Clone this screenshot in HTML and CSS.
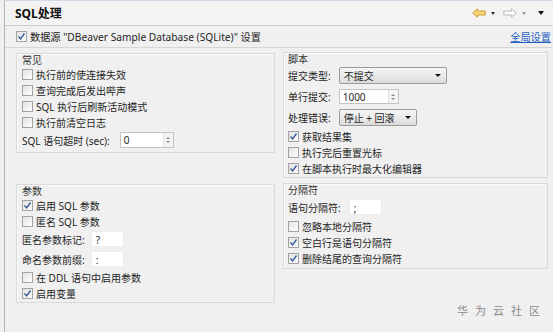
FILE: index.html
```html
<!DOCTYPE html>
<html lang="zh">
<head>
    <meta charset="UTF-8">
    <title>SQL处理</title>
    <link rel="stylesheet" href="styles.css">
</head>
<body>
    <div class="page">
        <header class="head">
            <h1 class="title">SQL处理</h1>
            <div class="tools">
                <svg class="arrow" width="14" height="10" viewBox="0 0 14 10"><path d="M0.8 5 L5.5 0.8 V3 H13.2 V7 H5.5 V9.2 Z" fill="#f7d67c" stroke="#d49a2c" stroke-width="1"/></svg>
                <span class="drop"></span>
                <svg class="arrow" width="14" height="10" viewBox="0 0 14 10"><path d="M13.2 5 L8.5 0.8 V3 H0.8 V7 H8.5 V9.2 Z" fill="#fbfbfb" stroke="#b9b9b9" stroke-width="1"/></svg>
                <span class="drop dim"></span>
                <span class="drop big"></span>
            </div>
        </header>

        <div class="source">
            <div class="chk"><span class="box on"><svg viewBox="0 0 9 9"><path d="M1.5 4.5 L3.6 6.8 L7.5 1.5" fill="none" stroke="#3b5b9e" stroke-width="1.4"/></svg></span>数据源 "DBeaver Sample Database (SQLite)" 设置</div>
            <a class="global" href="#">全局设置</a>
        </div>

        <div class="columns">
            <!-- left -->
            <div class="col">
                <section class="group common">
                    <div class="legend">常见</div>
                    <div class="chk"><span class="box"></span>执行前的使连接失效</div>
                    <div class="chk"><span class="box"></span>查询完成后发出哔声</div>
                    <div class="chk"><span class="box"></span>SQL 执行后刷新活动模式</div>
                    <div class="chk"><span class="box"></span>执行前清空日志</div>
                    <div class="line">
                        <span class="lbl">SQL 语句超时 (sec):</span>
                        <div class="spin"><span class="val">0</span><span class="btns"><i class="up"></i><i class="dn"></i></span></div>
                    </div>
                </section>

                <section class="group params">
                    <div class="legend">参数</div>
                    <div class="chk"><span class="box on"><svg viewBox="0 0 9 9"><path d="M1.5 4.5 L3.6 6.8 L7.5 1.5" fill="none" stroke="#3b5b9e" stroke-width="1.4"/></svg></span>启用 SQL 参数</div>
                    <div class="chk"><span class="box"></span>匿名 SQL 参数</div>
                    <div class="line tall">
                        <span class="lbl">匿名参数标记:</span>
                        <div class="field">?</div>
                    </div>
                    <div class="line tall">
                        <span class="lbl">命名参数前缀:</span>
                        <div class="field">:</div>
                    </div>
                    <div class="chk"><span class="box"></span>在 DDL 语句中启用参数</div>
                    <div class="chk"><span class="box on"><svg viewBox="0 0 9 9"><path d="M1.5 4.5 L3.6 6.8 L7.5 1.5" fill="none" stroke="#3b5b9e" stroke-width="1.4"/></svg></span>启用变量</div>
                </section>
            </div>

            <!-- right -->
            <div class="col">
                <section class="group script">
                    <div class="legend">脚本</div>
                    <div class="line mid">
                        <span class="lbl">提交类型:</span>
                        <div class="combo wide"><span>不提交</span><i class="tri"></i></div>
                    </div>
                    <div class="line mid">
                        <span class="lbl">单行提交:</span>
                        <div class="spin rows"><span class="val">1000</span><span class="btns"><i class="up"></i><i class="dn"></i></span></div>
                    </div>
                    <div class="line mid">
                        <span class="lbl">处理错误:</span>
                        <div class="combo"><span>停止&nbsp;+&nbsp;回滚</span><i class="tri"></i></div>
                    </div>
                    <div class="chk"><span class="box on"><svg viewBox="0 0 9 9"><path d="M1.5 4.5 L3.6 6.8 L7.5 1.5" fill="none" stroke="#3b5b9e" stroke-width="1.4"/></svg></span>获取结果集</div>
                    <div class="chk"><span class="box"></span>执行完后重置光标</div>
                    <div class="chk"><span class="box on"><svg viewBox="0 0 9 9"><path d="M1.5 4.5 L3.6 6.8 L7.5 1.5" fill="none" stroke="#3b5b9e" stroke-width="1.4"/></svg></span>在脚本执行时最大化编辑器</div>
                </section>

                <section class="group delim">
                    <div class="legend">分隔符</div>
                    <div class="line big">
                        <span class="lbl">语句分隔符:</span>
                        <div class="field">;</div>
                    </div>
                    <div class="chk"><span class="box"></span>忽略本地分隔符</div>
                    <div class="chk"><span class="box on"><svg viewBox="0 0 9 9"><path d="M1.5 4.5 L3.6 6.8 L7.5 1.5" fill="none" stroke="#3b5b9e" stroke-width="1.4"/></svg></span>空白行是语句分隔符</div>
                    <div class="chk"><span class="box on"><svg viewBox="0 0 9 9"><path d="M1.5 4.5 L3.6 6.8 L7.5 1.5" fill="none" stroke="#3b5b9e" stroke-width="1.4"/></svg></span>删除结尾的查询分隔符</div>
                </section>
            </div>
        </div>

        <div class="mark">华为云社区</div>
    </div>
</body>
</html>
```

FILE: styles.css
```css
/* base */
body {
    margin: 0;
    background: #f0f0f0;
    font-family: "Noto Sans", "Noto Sans CJK SC", sans-serif;
    font-size: 10px;
    color: #1f1f1f;
}
.page {
    position: relative;
    height: 332px;
    margin-left: 4px;
    border-left: 1px solid #b3b3b3;
    border-top: 1px solid #cfdbe9;
    box-sizing: border-box;
}

/* header */
.head {
    height: 24px;
    display: flex;
    align-items: center;
    justify-content: space-between;
    padding: 0 9px 0 10px;
    border-bottom: 1px solid #cdcdcd;
    background: #f3f3f3;
}
.title { margin: 0; font-size: 12px; font-weight: bold; color: #111; }
.tools { display: flex; align-items: center; gap: 3px; }
.drop {
    width: 0; height: 0;
    border-left: 2.5px solid transparent;
    border-right: 2.5px solid transparent;
    border-top: 3px solid #2b2b2b;
    margin: 0 5px 0 2px;
}
.drop.dim { border-top-color: #9c9c9c; }
.drop.big { border-left-width: 3.5px; border-right-width: 3.5px; border-top-width: 4px; border-top-color: #111; margin: 0 0 0 4px; }

/* data source row */
.source {
    height: 21px;
    display: flex;
    align-items: center;
    justify-content: space-between;
    padding: 0 2px 0 11px;
    border-bottom: 1px solid #d6d6d6;
    font-size: 10.2px;
}
.global { color: #1f5fbf; text-decoration: underline; }

/* columns */
.columns {
    display: grid;
    grid-template-columns: 259px 265px;
    gap: 8px;
    padding: 4px 0 0 11px;
}
.col { display: flex; flex-direction: column; }
.group {
    border: 1px solid #d9d9d9;
    box-shadow: inset 1px 1px 0 #fafafa;
    padding: 0 0 1px 5px;
}
.col + .col .group { padding-left: 4px; }
.common { margin-top: 1px; padding-bottom: 2px; }
.params { margin-top: 31px; }
.delim { margin-top: 5px; padding-bottom: 2px; }
.legend { height: 12px; line-height: 12px; color: #333; }

/* checkbox rows */
.chk { height: 16px; display: flex; align-items: center; gap: 3px; white-space: nowrap; }
.box {
    width: 9px; height: 9px;
    border: 1px solid #a3a3a3;
    background: linear-gradient(135deg, #e2e2e2, #fdfdfd);
    display: flex;
    flex: none;
}
.box svg { width: 9px; height: 9px; }

/* label + control rows */
.line { height: 20px; display: flex; align-items: center; gap: 10px; white-space: nowrap; }
.line.tall { height: 20px; gap: 6px; }
.line.mid { height: 21px; gap: 8px; }
.line.big { height: 22px; gap: 8px; }
.spin {
    width: 54px; height: 16px;
    background: #fff;
    border: 1px solid #c4c4c4;
    display: flex;
    justify-content: space-between;
    align-items: center;
    box-sizing: border-box;
    padding-left: 3px;
}
.spin.rows { width: 60px; height: 15px; }
.btns { width: 9px; height: 100%; display: flex; flex-direction: column; justify-content: center; gap: 2px; background: #f4f4f4; border-left: 1px solid #e0e0e0; align-items: center; }
.up, .dn { width: 0; height: 0; border-left: 2px solid transparent; border-right: 2px solid transparent; }
.up { border-bottom: 2px solid #7e8ea6; }
.dn { border-top: 2px solid #7e8ea6; }
.combo {
    width: 78px; height: 17px;
    box-sizing: border-box;
    border: 1px solid #9a9a9a;
    border-radius: 2px;
    background: linear-gradient(#f7f7f7, #dcdcdc);
    display: flex;
    align-items: center;
    justify-content: space-between;
    padding: 0 5px 0 4px;
}
.combo.wide { width: 108px; }
.tri { width: 0; height: 0; border-left: 3px solid transparent; border-right: 3px solid transparent; border-top: 3px solid #111; }
.field {
    width: 33px; height: 16px;
    line-height: 16px;
    background: #fff;
    border: 1px solid #ececec;
    box-sizing: border-box;
    padding-left: 4px;
}

/* watermark */
.mark {
    position: absolute;
    right: 6px;
    bottom: 14px;
    font-size: 11px;
    letter-spacing: 7px;
    color: #8b8b8b;
}
```
